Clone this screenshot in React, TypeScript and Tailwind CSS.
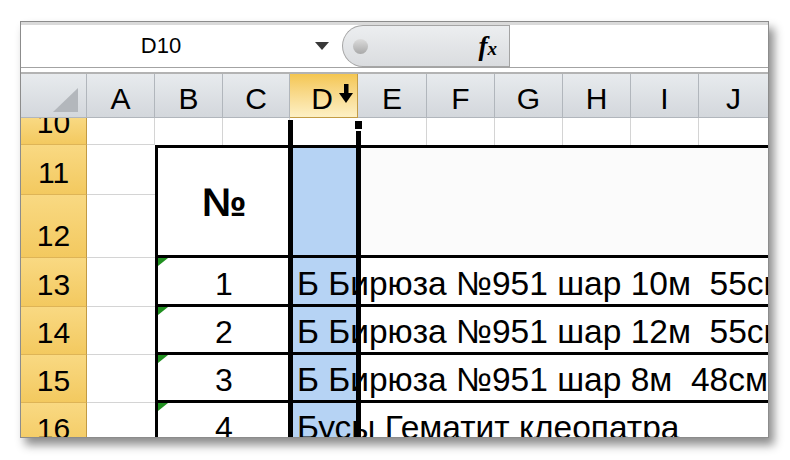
import React from "react";

const rowHeader =
  "col-start-1 flex items-end justify-center overflow-hidden pb-[6px] text-[30px] leading-none bg-gradient-to-b from-[#f9d982] to-[#f3c95f] border-r border-r-[#c29a42] border-b border-b-[#deb456]";

function GreenTri() {
  return (
    <svg className="absolute left-0 top-0" width="10" height="8" viewBox="0 0 10 8">
      <polygon points="0,0 10,0 0,8" fill="#219021" />
    </svg>
  );
}

const items = [
  { n: "1", t: "Б Бирюза №951 шар 10м  55см" },
  { n: "2", t: "Б Бирюза №951 шар 12м  55см" },
  { n: "3", t: "Б Бирюза №951 шар 8м  48см" },
  { n: "4", t: "Бусы Гематит клеопатра" },
];

const rowStarts = ["row-start-4", "row-start-5", "row-start-6", "row-start-7"];
const rowLabels = ["13", "14", "15", "16"];

export default function App() {
  const cols = ["A", "B", "C", "D", "E", "F", "G", "H", "I", "J"];
  const row10Cells = [
    "col-start-2 row-start-1 border-r border-b border-[#d4d4d4]",
    "col-start-3 row-start-1 border-r border-[#d4d4d4]",
    "col-start-4 row-start-1 border-r border-[#d4d4d4]",
    "col-start-5 row-start-1",
    "col-start-6 row-start-1 border-r border-[#d4d4d4]",
    "col-start-7 row-start-1 border-r border-[#d4d4d4]",
    "col-start-8 row-start-1 border-r border-[#d4d4d4]",
    "col-start-9 row-start-1 border-r border-[#d4d4d4]",
    "col-start-10 row-start-1 border-r border-[#d4d4d4]",
    "col-start-11 row-start-1",
  ];
  return (
    <div className="w-[790px] h-[460px] bg-white font-['Liberation_Sans',Arial,sans-serif] text-black">
      <div className="pt-[21px] pl-[20px]">
        <div className="w-[749px] h-[417px] overflow-hidden border border-[#8c8c8c] shadow-[5px_7px_9px_rgba(0,0,0,0.45)] flex flex-col bg-white">
          {/* top band */}
          <div className="h-[3px] shrink-0 bg-[#dadada]" />
          {/* formula bar */}
          <div className="h-[43px] shrink-0 flex border-b border-[#a3a3a3]">
            <div className="w-[321px] flex items-center bg-white">
              <div className="w-[280px] text-center text-[22px] leading-none">D10</div>
              <div className="ml-[14px] w-0 h-0 border-l-[7px] border-r-[7px] border-t-[8px] border-l-transparent border-r-transparent border-t-[#383838]" />
            </div>
            <div className="w-[167px] flex items-center justify-between rounded-l-full border border-r-0 border-[#a5a5a5] bg-gradient-to-b from-[#eceef0] to-[#dadcdf] pl-[10px] pr-[12px]">
              <div className="w-[15px] h-[15px] rounded-full bg-gradient-to-b from-[#dcdcdc] to-[#a9a9a9]" />
              <span className="font-['Liberation_Serif',serif] italic font-bold text-[27px] leading-none">
                f<span className="text-[19px]">x</span>
              </span>
            </div>
            <div className="flex-1 border-l border-[#a3a3a3] bg-white" />
          </div>
          <div className="h-[4px] shrink-0 bg-white" />
          <div className="h-[2px] shrink-0 bg-[#b3b3b3]" />
          {/* column headers */}
          <div className="h-[44px] shrink-0 grid grid-cols-[66px_68px_68px_67px_68px_69px_68px_68px_68px_68px_1fr]">
            <div className="flex items-end justify-end pr-[8px] pb-[5px] border-r border-b border-[#b1b6bc] bg-gradient-to-b from-[#e8ebee] to-[#d3d7dc]">
              <svg width="25" height="24" viewBox="0 0 25 24">
                <polygon points="25,0 25,24 0,24" fill="#b3b7bc" />
              </svg>
            </div>
            {cols.map((c) =>
              c === "D" ? (
                <div
                  key={c}
                  className="relative flex items-center justify-center pt-[6px] text-[30px] leading-none border-r border-b border-[#c39c45] bg-gradient-to-b from-[#f4c650] to-[#fdf0c4]"
                >
                  <span className="mr-[3px]">D</span>
                  <svg className="absolute right-[4px] top-[10px]" width="14" height="19" viewBox="0 0 14 19">
                    <rect x="5" y="0" width="4.5" height="10" fill="#000" />
                    <polygon points="0,9 14,9 7,19" fill="#000" />
                  </svg>
                </div>
              ) : (
                <div
                  key={c}
                  className="flex items-center justify-center pt-[6px] text-[30px] leading-none border-r border-b border-[#b1b6bc] bg-gradient-to-b from-[#e8ebee] to-[#d3d7dc] last:border-r-0"
                >
                  {c}
                </div>
              )
            )}
          </div>
          {/* data grid */}
          <div className="relative flex-1 grid grid-cols-[66px_68px_68px_67px_68px_69px_68px_68px_68px_68px_1fr] grid-rows-[27px_50px_63px_49px_48px_48px_48px]">
            {/* row 10 */}
            <div className={rowHeader + " row-start-1"}>10</div>
            {row10Cells.map((cl, i) => (
              <div key={i} className={cl} />
            ))}
            {/* rows 11-12 */}
            <div className={rowHeader + " row-start-2"}>11</div>
            <div className={rowHeader + " row-start-3"}>12</div>
            <div className="col-start-2 row-start-2 border-b border-[#d4d4d4]" />
            <div className="col-start-2 row-start-3 border-b border-[#d4d4d4]" />
            <div className="col-start-3 col-span-2 row-start-2 row-span-2 flex items-center justify-center border-t-[3px] border-l-[3px] border-b-[3px] border-black font-bold text-[40px] leading-none">
              №
            </div>
            <div className="col-start-5 row-start-2 row-span-2 bg-[#b6d3f4] border-t-[3px] border-b-[3px] border-black" />
            <div className="col-start-6 col-span-6 row-start-2 row-span-2 bg-[#fbfbfb] border-t-[3px] border-b-[3px] border-black" />
            {/* rows 13-16 */}
            {items.map((it, i) => (
              <React.Fragment key={i}>
                <div className={rowHeader + " " + rowStarts[i]}>{rowLabels[i]}</div>
                <div className={"col-start-2 border-b border-[#d4d4d4] " + rowStarts[i]} />
                <div
                  className={
                    "relative col-start-3 col-span-2 flex items-end justify-center pb-[4px] border-l-[3px] border-b-[3px] border-black text-[32px] leading-none " +
                    rowStarts[i]
                  }
                >
                  <GreenTri />
                  {it.n}
                </div>
                <div
                  className={
                    "col-start-5 min-w-0 flex items-end pl-[7px] pb-[4px] bg-[#b6d3f4] border-b-[3px] border-black whitespace-pre text-[33.5px] leading-none " +
                    rowStarts[i]
                  }
                >
                  {it.t}
                </div>
                <div className={"col-start-6 col-span-6 border-b-[3px] border-black " + rowStarts[i]} />
              </React.Fragment>
            ))}
            {/* selection overlay for column D */}
            <div className="absolute left-[267px] top-[2px] bottom-0 w-[5px] bg-black" />
            <div className="absolute left-[335px] top-[13px] bottom-0 w-[5px] bg-black" />
            <div className="absolute left-[334px] top-[3px] w-[7px] h-[8px] bg-black" />
          </div>
        </div>
      </div>
    </div>
  );
}
